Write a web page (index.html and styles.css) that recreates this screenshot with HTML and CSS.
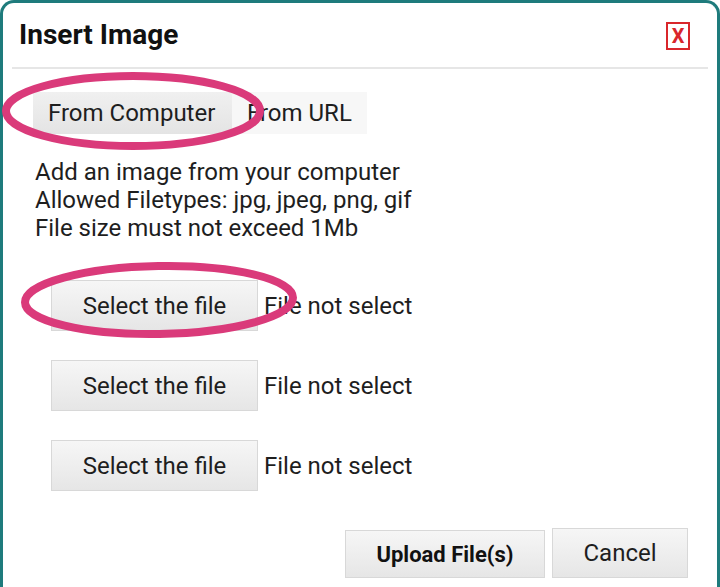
FILE: index.html
```html
<!DOCTYPE html>
<html>
<head>
<meta charset="utf-8">
<link rel="stylesheet" href="styles.css">
</head>
<body>
<div class="dialog">
  <div class="header">
    <h1 class="title">Insert Image</h1>
    <span class="close">X</span>
  </div>
  <div class="content">
    <div class="tabs">
      <span class="tab active">From Computer</span>
      <span class="tab">From URL</span>
    </div>
    <div class="desc">
      <div>Add an image from your computer</div>
      <div>Allowed Filetypes: jpg, jpeg, png, gif</div>
      <div>File size must not exceed 1Mb</div>
    </div>
    <div class="files">
      <div class="file-row"><span class="btn file-btn">Select the file</span><span class="status">File not select</span></div>
      <div class="file-row"><span class="btn file-btn">Select the file</span><span class="status">File not select</span></div>
      <div class="file-row"><span class="btn file-btn">Select the file</span><span class="status">File not select</span></div>
    </div>
    <div class="footer">
      <span class="btn upload">Upload File(s)</span>
      <span class="btn cancel">Cancel</span>
    </div>
  </div>
</div>
<svg class="annot" width="720" height="587" viewBox="0 0 720 587">
  <ellipse cx="133" cy="111" rx="127" ry="35" fill="none" stroke="#da3a7a" stroke-width="8"/>
  <ellipse cx="159" cy="300" rx="134" ry="34" fill="none" stroke="#da3a7a" stroke-width="8" transform="rotate(-1 159 300)"/>
</svg>
</body>
</html>
```
FILE: styles.css
```css
html, body {
  margin: 0;
  padding: 0;
  background: #fff;
  width: 720px;
  height: 587px;
  overflow: hidden;
  font-family: Roboto, "Noto Sans", sans-serif;
  color: #1e1e1e;
}
.dialog {
  box-sizing: border-box;
  width: 720px;
  height: 600px;
  border: 3px solid #1e7b7c;
  border-bottom: none;
  border-radius: 14px 14px 0 0;
  background: #fff;
}
.header {
  display: flex;
  align-items: center;
  justify-content: space-between;
  margin: 0 9px;
  height: 64px;
  border-bottom: 2px solid #e6e6e6;
  padding: 0 18px 0 7px;
}
.title {
  margin: 0;
  font-size: 28px;
  font-weight: 700;
  color: #111;
  padding-bottom: 2px;
}
.close {
  box-sizing: border-box;
  width: 24px;
  height: 28px;
  border: 2px solid #d9262b;
  color: #d9262b;
  font-weight: 700;
  font-size: 20px;
  display: flex;
  align-items: center;
  justify-content: center;
  margin-top: 2px;
}
.content {
  padding: 23px 0 0 30px;
}
.tabs {
  display: flex;
  height: 42px;
}
.tab {
  display: flex;
  align-items: center;
  padding: 0 15px;
  font-size: 24px;
  background: #f7f7f7;
}
.tab.active {
  width: 199px;
  box-sizing: border-box;
  background: linear-gradient(#f0f0f0, #e4e4e4);
}
.desc {
  margin-top: 24px;
  font-size: 24px;
  line-height: 28px;
  padding-left: 2px;
}
.files {
  margin-top: 38px;
  padding-left: 18px;
  display: flex;
  flex-direction: column;
  gap: 29px;
}
.file-row {
  display: flex;
  align-items: center;
  gap: 6px;
}
.btn {
  box-sizing: border-box;
  display: flex;
  align-items: center;
  justify-content: center;
  border: 1px solid #d8d8d8;
  background: linear-gradient(#f6f6f6, #e6e6e6);
  font-size: 24px;
}
.file-btn {
  width: 207px;
  height: 51px;
}
.status {
  font-size: 24px;
}
.footer {
  display: flex;
  justify-content: flex-end;
  align-items: flex-end;
  gap: 7px;
  margin-top: 37px;
  padding-right: 29px;
}
.upload {
  width: 200px;
  height: 48px;
  font-size: 22px;
  font-weight: 700;
  color: #111;
}
.cancel {
  width: 136px;
  height: 50px;
}
.annot {
  position: absolute;
  left: 0;
  top: 0;
  pointer-events: none;
}
```
